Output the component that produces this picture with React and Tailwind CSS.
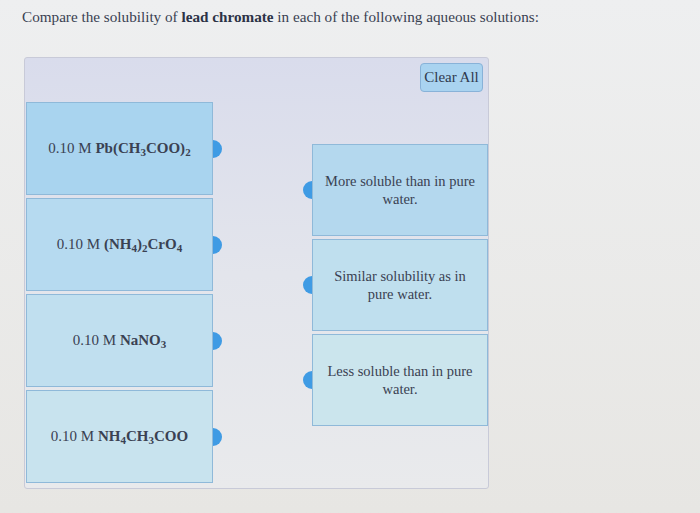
import React from "react";

const serif = { fontFamily: '"Liberation Serif", "Times New Roman", serif' };

const sources = [
  { id: 1, bg: "bg-[#a9d4ef]", label: <>0.10 M <b>Pb(CH<sub>3</sub>COO)<sub>2</sub></b></> },
  { id: 2, bg: "bg-[#b6daf0]", label: <>0.10 M <b>(NH<sub>4</sub>)<sub>2</sub>CrO<sub>4</sub></b></> },
  { id: 3, bg: "bg-[#c0dfef]", label: <>0.10 M <b>NaNO<sub>3</sub></b></> },
  { id: 4, bg: "bg-[#c8e3ee]", label: <>0.10 M <b>NH<sub>4</sub>CH<sub>3</sub>COO</b></> },
];

const targets = [
  { id: "a", bg: "bg-[#b4d8ee]", text: "More soluble than in pure water." },
  { id: "b", bg: "bg-[#bfdfee]", text: "Similar solubility as in pure water." },
  { id: "c", bg: "bg-[#cbe5ed]", text: "Less soluble than in pure water." },
];

const Tab = ({ side }) => (
  <div
    className={
      "w-[9px] h-[18px] bg-[#3f9be4] " +
      (side === "right" ? "rounded-r-full" : "rounded-l-full")
    }
  />
);

export default function App() {
  return (
    <div
      className="w-[700px] h-[513px] bg-gradient-to-b from-[#eeeff0] to-[#e7e6e3] text-[#3a4152] overflow-hidden"
      style={serif}
    >
      <p className="pl-[22px] pt-[8px] text-[15.2px] leading-[18px]">
        Compare the solubility of <b className="text-[#2c3246]">lead chromate</b> in each of the following aqueous solutions:
      </p>

      <div className="ml-[24px] mt-[31px] w-[465px] h-[432px] rounded-[3px] border border-[#c8cad8] bg-gradient-to-b from-[#d9dcec] via-[#e3e5ec] to-[#e9eaec] px-[1px] pt-[5px]">
        <div className="flex justify-end pr-[4px]">
          <button className="h-[29px] w-[63px] rounded-[4px] border border-[#88b2d8] bg-[#a9d3f0] text-[15px] text-[#2f3a4e]">
            Clear All
          </button>
        </div>

        <div className="flex mt-[10px]">
          {/* answer sources */}
          <div className="flex flex-col gap-[3px]">
            {sources.map((s) => (
              <div key={s.id} className="flex items-center">
                <div
                  className={`w-[187px] h-[93px] border border-[#8fb9d9] ${s.bg} flex items-center justify-center text-[15px] [&_sub]:text-[11px]`}
                >
                  <span>{s.label}</span>
                </div>
                <Tab side="right" />
              </div>
            ))}
          </div>

          {/* drop targets */}
          <div className="ml-[81px] mt-[42px] flex flex-col gap-[3px]">
            {targets.map((t) => (
              <div key={t.id} className="flex items-center">
                <Tab side="left" />
                <div
                  className={`w-[176px] h-[92px] border border-[#8fb9d9] ${t.bg} flex items-center justify-center px-[12px] text-center text-[14.5px] leading-[18px]`}
                >
                  {t.text}
                </div>
              </div>
            ))}
          </div>
        </div>
      </div>
    </div>
  );
}
